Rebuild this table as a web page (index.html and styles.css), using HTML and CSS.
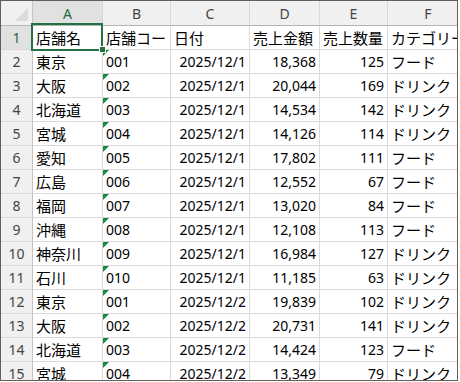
FILE: index.html
```html
<!DOCTYPE html>
<html lang="ja">
<head>
<meta charset="utf-8">
<link rel="stylesheet" href="styles.css">
</head>
<body>
<div class="sheet">
  <div class="grid">
    <div class="corner"><span class="corner-tri"></span></div>
    <div class="ch sel">A</div>
    <div class="ch">B</div>
    <div class="ch">C</div>
    <div class="ch">D</div>
    <div class="ch">E</div>
    <div class="ch last">F</div>

    <div class="rh sel">1</div>
    <div class="c jp">店舗名</div>
    <div class="c jp">店舗コード</div>
    <div class="c jp">日付</div>
    <div class="c jp">売上金額</div>
    <div class="c jp">売上数量</div>
    <div class="c jp last">カテゴリー</div>

    <div class="rh">2</div><div class="c jp">東京</div><div class="c code">001</div><div class="c num">2025/12/1</div><div class="c num">18,368</div><div class="c num">125</div><div class="c jp last">フード</div>
    <div class="rh">3</div><div class="c jp">大阪</div><div class="c code">002</div><div class="c num">2025/12/1</div><div class="c num">20,044</div><div class="c num">169</div><div class="c jp last">ドリンク</div>
    <div class="rh">4</div><div class="c jp">北海道</div><div class="c code">003</div><div class="c num">2025/12/1</div><div class="c num">14,534</div><div class="c num">142</div><div class="c jp last">ドリンク</div>
    <div class="rh">5</div><div class="c jp">宮城</div><div class="c code">004</div><div class="c num">2025/12/1</div><div class="c num">14,126</div><div class="c num">114</div><div class="c jp last">ドリンク</div>
    <div class="rh">6</div><div class="c jp">愛知</div><div class="c code">005</div><div class="c num">2025/12/1</div><div class="c num">17,802</div><div class="c num">111</div><div class="c jp last">フード</div>
    <div class="rh">7</div><div class="c jp">広島</div><div class="c code">006</div><div class="c num">2025/12/1</div><div class="c num">12,552</div><div class="c num">67</div><div class="c jp last">フード</div>
    <div class="rh">8</div><div class="c jp">福岡</div><div class="c code">007</div><div class="c num">2025/12/1</div><div class="c num">13,020</div><div class="c num">84</div><div class="c jp last">フード</div>
    <div class="rh">9</div><div class="c jp">沖縄</div><div class="c code">008</div><div class="c num">2025/12/1</div><div class="c num">12,108</div><div class="c num">113</div><div class="c jp last">フード</div>
    <div class="rh">10</div><div class="c jp">神奈川</div><div class="c code">009</div><div class="c num">2025/12/1</div><div class="c num">16,984</div><div class="c num">127</div><div class="c jp last">ドリンク</div>
    <div class="rh">11</div><div class="c jp">石川</div><div class="c code">010</div><div class="c num">2025/12/1</div><div class="c num">11,185</div><div class="c num">63</div><div class="c jp last">ドリンク</div>
    <div class="rh">12</div><div class="c jp">東京</div><div class="c code">001</div><div class="c num">2025/12/2</div><div class="c num">19,839</div><div class="c num">102</div><div class="c jp last">ドリンク</div>
    <div class="rh">13</div><div class="c jp">大阪</div><div class="c code">002</div><div class="c num">2025/12/2</div><div class="c num">20,731</div><div class="c num">141</div><div class="c jp last">ドリンク</div>
    <div class="rh">14</div><div class="c jp">北海道</div><div class="c code">003</div><div class="c num">2025/12/2</div><div class="c num">14,424</div><div class="c num">123</div><div class="c jp last">フード</div>
    <div class="rh">15</div><div class="c jp">宮城</div><div class="c code">004</div><div class="c num">2025/12/2</div><div class="c num">13,349</div><div class="c num">79</div><div class="c jp last">ドリンク</div>
  </div>
  <div class="selection"></div>
  <div class="handle"></div>
</div>
</body>
</html>
```

FILE: styles.css
```css
html, body {
  margin: 0;
  padding: 0;
  background: #ffffff;
}

.sheet {
  position: relative;
  width: 458px;
  height: 381px;
  box-sizing: border-box;
  border: 1px solid #5f5f5f;
  overflow: hidden;
  background: #ffffff;
  font-family: "Noto Sans", "Noto Sans CJK JP", sans-serif;
  color: #000000;
}

.grid {
  display: grid;
  grid-template-columns: 32px 70px 68px 79px 70px 68px 80px;
  grid-template-rows: 25px repeat(15, 24px);
}

.grid > div {
  box-sizing: border-box;
  border-right: 1px solid #dadada;
  border-bottom: 1px solid #dadada;
  overflow: hidden;
  white-space: nowrap;
  display: flex;
  align-items: center;
}

.corner {
  position: relative;
  background: #f0f0f0;
  border-right: 1px solid #c4c4c4 !important;
  border-bottom: 1px solid #b4b4b4 !important;
}

.corner-tri {
  position: absolute;
  right: 4px;
  bottom: 4px;
  width: 0;
  height: 0;
  border-left: 13px solid transparent;
  border-bottom: 13px solid #dcdcdc;
}

.ch {
  background: #f0f0f0;
  color: #444444;
  font-size: 14px;
  justify-content: center;
  border-right: 1px solid #d8d8d8 !important;
  border-bottom: 1px solid #b4b4b4 !important;
}

.ch.sel {
  background: #e1e1e1;
  color: #1e6b3d;
}

.rh {
  background: #f0f0f0;
  color: #444444;
  font-size: 14px;
  justify-content: center;
  border-right: 1px solid #c4c4c4 !important;
  border-bottom: 1px solid #d8d8d8 !important;
}

.rh.sel {
  background: #e1e1e1;
  color: #1e6b3d;
}

.c {
  padding: 0 3px;
  font-size: 14px;
}

.c.jp {
  font-size: 15px;
  font-family: "Noto Sans CJK JP", sans-serif;
}

.c.num {
  justify-content: flex-end;
}

.c.code {
  position: relative;
}

.c.code::before {
  content: "";
  position: absolute;
  left: 0;
  top: 0;
  width: 0;
  height: 0;
  border-top: 6px solid #178a3a;
  border-right: 6px solid transparent;
}

.last {
  border-right: none !important;
}

.selection {
  position: absolute;
  left: 30px;
  top: 22px;
  width: 72px;
  height: 28px;
  box-sizing: border-box;
  border: 2px solid #217346;
}

.handle {
  position: absolute;
  left: 98px;
  top: 45px;
  width: 5px;
  height: 5px;
  background: #217346;
  border: 1px solid #ffffff;
}
```
